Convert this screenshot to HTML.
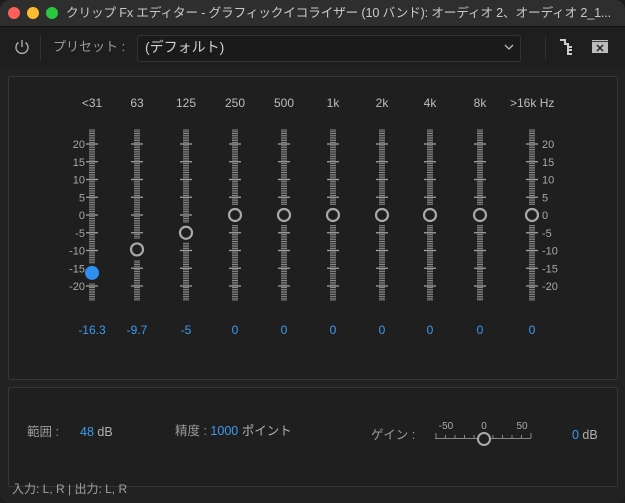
<!DOCTYPE html><html><head><meta charset="utf-8"><style>
html,body{margin:0;padding:0;width:625px;height:503px;overflow:hidden;background:#1c1c1c}
body{font-family:"Liberation Sans","Noto Sans CJK JP",sans-serif;position:relative}
.win{position:absolute;left:0;top:0;width:625px;height:503px;background:#222;border-radius:10px;overflow:hidden}
.title{position:absolute;left:0;top:0;width:625px;height:26px;background:#2e2e2e;border-bottom:1px solid #111;color:#c8c8c8;font-size:13.5px;line-height:26px}
.dot{position:absolute;top:7px;width:12px;height:12px;border-radius:50%}
.t{position:absolute;color:#b0b0b0;font-size:12px;white-space:nowrap;line-height:16px}
.blue{color:#3d9bf0}
.panel{position:absolute;border:1px solid #363636;background:#1f1f1f;border-radius:2px}
</style></head><body><div class="win">
<div class="title"><div class="dot" style="left:8px;background:#fe5f57"></div><div class="dot" style="left:27px;background:#febc2e"></div><div class="dot" style="left:46px;background:#28c840"></div>
<span style="position:absolute;left:66px;top:0;width:555px;overflow:hidden;white-space:nowrap;font-size:12.7px;letter-spacing:-0.2px">クリップ Fx エディター - グラフィックイコライザー (10 バンド): オーディオ 2、オーディオ 2_1...</span></div>
<div style="position:absolute;left:0;top:27px;width:625px;height:42px;background:#1e1e1e"></div>
<svg style="position:absolute;left:13px;top:38px" width="18" height="18" viewBox="0 0 18 18"><path d="M5.5 4.5 A6 6 0 1 0 12.5 4.5" fill="none" stroke="#aaa" stroke-width="1.4"/><line x1="9" y1="2" x2="9" y2="9" stroke="#aaa" stroke-width="1.4"/></svg>
<div style="position:absolute;left:40px;top:36px;width:1px;height:24px;background:#333"></div>
<div class="t" style="left:53px;top:39px;font-size:13px;color:#9a9a9a">プリセット :</div>
<div style="position:absolute;left:137px;top:35px;width:382px;height:25px;background:#1a1a1a;border:1px solid #333;border-radius:3px"></div>
<div class="t" style="left:145px;top:39px;font-size:14px;color:#d0d0d0">(デフォルト)</div>
<svg style="position:absolute;left:419px;top:38px" width="100" height="20"><path d="M86 7 l4 4 l4 -4" fill="none" stroke="#bbb" stroke-width="1.3"/></svg>
<div style="position:absolute;left:545px;top:36px;width:1px;height:24px;background:#333"></div>
<svg style="position:absolute;left:558px;top:38px" width="60" height="20"><path d="M2 2h5v4h3v3h4M10 9v7h4M10 12h4" fill="none" stroke="#ccc" stroke-width="2"/><rect x="34" y="4" width="16" height="11" fill="#bbb"/><rect x="34" y="2" width="16" height="1.2" fill="#bbb"/><path d="M39 7l6 6M45 7l-6 6" stroke="#222" stroke-width="1.5"/></svg>
<div class="panel" style="left:8px;top:76px;width:608px;height:302px"></div>
<div class="panel" style="left:8px;top:387px;width:608px;height:98px"></div>
<svg id="eq" style="position:absolute;left:0;top:0" width="625" height="503"></svg>
<div class="t" style="left:27px;top:424px;font-size:12.5px;color:#9a9a9a">範囲 :</div>
<div class="t" style="left:80px;top:424px;font-size:12.5px"><span class="blue">48</span> dB</div>
<div class="t" style="left:175px;top:423px;font-size:12.5px;color:#9a9a9a">精度 : <span class="blue">1000</span> <span style="color:#b0b0b0">ポイント</span></div>
<div class="t" style="left:371px;top:427px;font-size:12.5px;color:#9a9a9a">ゲイン :</div>
<div class="t" style="left:572px;top:427px;font-size:12.5px"><span class="blue">0</span> dB</div>
<div class="t" style="left:12px;top:481px;font-size:12px;color:#a0a0a0">入力: L, R | 出力: L, R</div>
</div>
<script>
var s='',cols=[92,137,186,235,284,333,382,430,480,532],fr=['<31','63','125','250','500','1k','2k','4k','8k','>16k Hz'],v=[-16.3,-9.7,-5,0,0,0,0,0,0,0];
function Y(d){return 215-d*3.55}
for(var i=0;i<10;i++){var x=cols[i],ky=Y(v[i]);
s+='<text x="'+(i==9?x-22:x)+'" y="107" fill="#bdbdbd" font-size="12" text-anchor="'+(i==9?'start':'middle')+'">'+fr[i]+'</text>';
for(var y=130;y<=300;y+=1.77){if(Math.abs(y-ky)<10)continue;s+='<line x1="'+(x-3)+'" x2="'+(x+3)+'" y1="'+y.toFixed(1)+'" y2="'+y.toFixed(1)+'" stroke="#8a8a8a" stroke-width="1"/>';}
for(var d=-20;d<=20;d+=5){var yy=Y(d);if(Math.abs(yy-ky)<9)continue;s+='<line x1="'+(x-6)+'" x2="'+(x+6)+'" y1="'+yy+'" y2="'+yy+'" stroke="#a0a0a0" stroke-width="1.3"/>';}
if(i==0)s+='<circle cx="'+x+'" cy="'+ky+'" r="7" fill="#2f8ff0"/>';else s+='<circle cx="'+x+'" cy="'+ky+'" r="6" fill="#1f1f1f" stroke="#a8a8a8" stroke-width="2.2"/>';
s+='<text x="'+x+'" y="334" fill="#3d9bf0" font-size="12" text-anchor="middle">'+v[i]+'</text>';}
for(var d=-20;d<=20;d+=5){var yy=Y(d)+4;s+='<text x="85" y="'+yy+'" fill="#a8a8a8" font-size="11" text-anchor="end">'+d+'</text><text x="542" y="'+yy+'" fill="#a8a8a8" font-size="11">'+d+'</text>';}
s+='<line x1="435" x2="531" y1="438.5" y2="438.5" stroke="#888"/>';
for(var k=0;k<=10;k++){var gx=436+k*9.5;s+='<line x1="'+gx+'" x2="'+gx+'" y1="'+(k%5==0?433:435)+'" y2="438" stroke="#888"/>';}
s+='<circle cx="484" cy="439" r="6" fill="#1f1f1f" stroke="#aaa" stroke-width="2"/>';
s+='<text x="446" y="429" fill="#aaa" font-size="10" text-anchor="middle">-50</text><text x="484" y="429" fill="#aaa" font-size="10" text-anchor="middle">0</text><text x="522" y="429" fill="#aaa" font-size="10" text-anchor="middle">50</text>';
document.getElementById('eq').innerHTML=s;
</script></body></html>
